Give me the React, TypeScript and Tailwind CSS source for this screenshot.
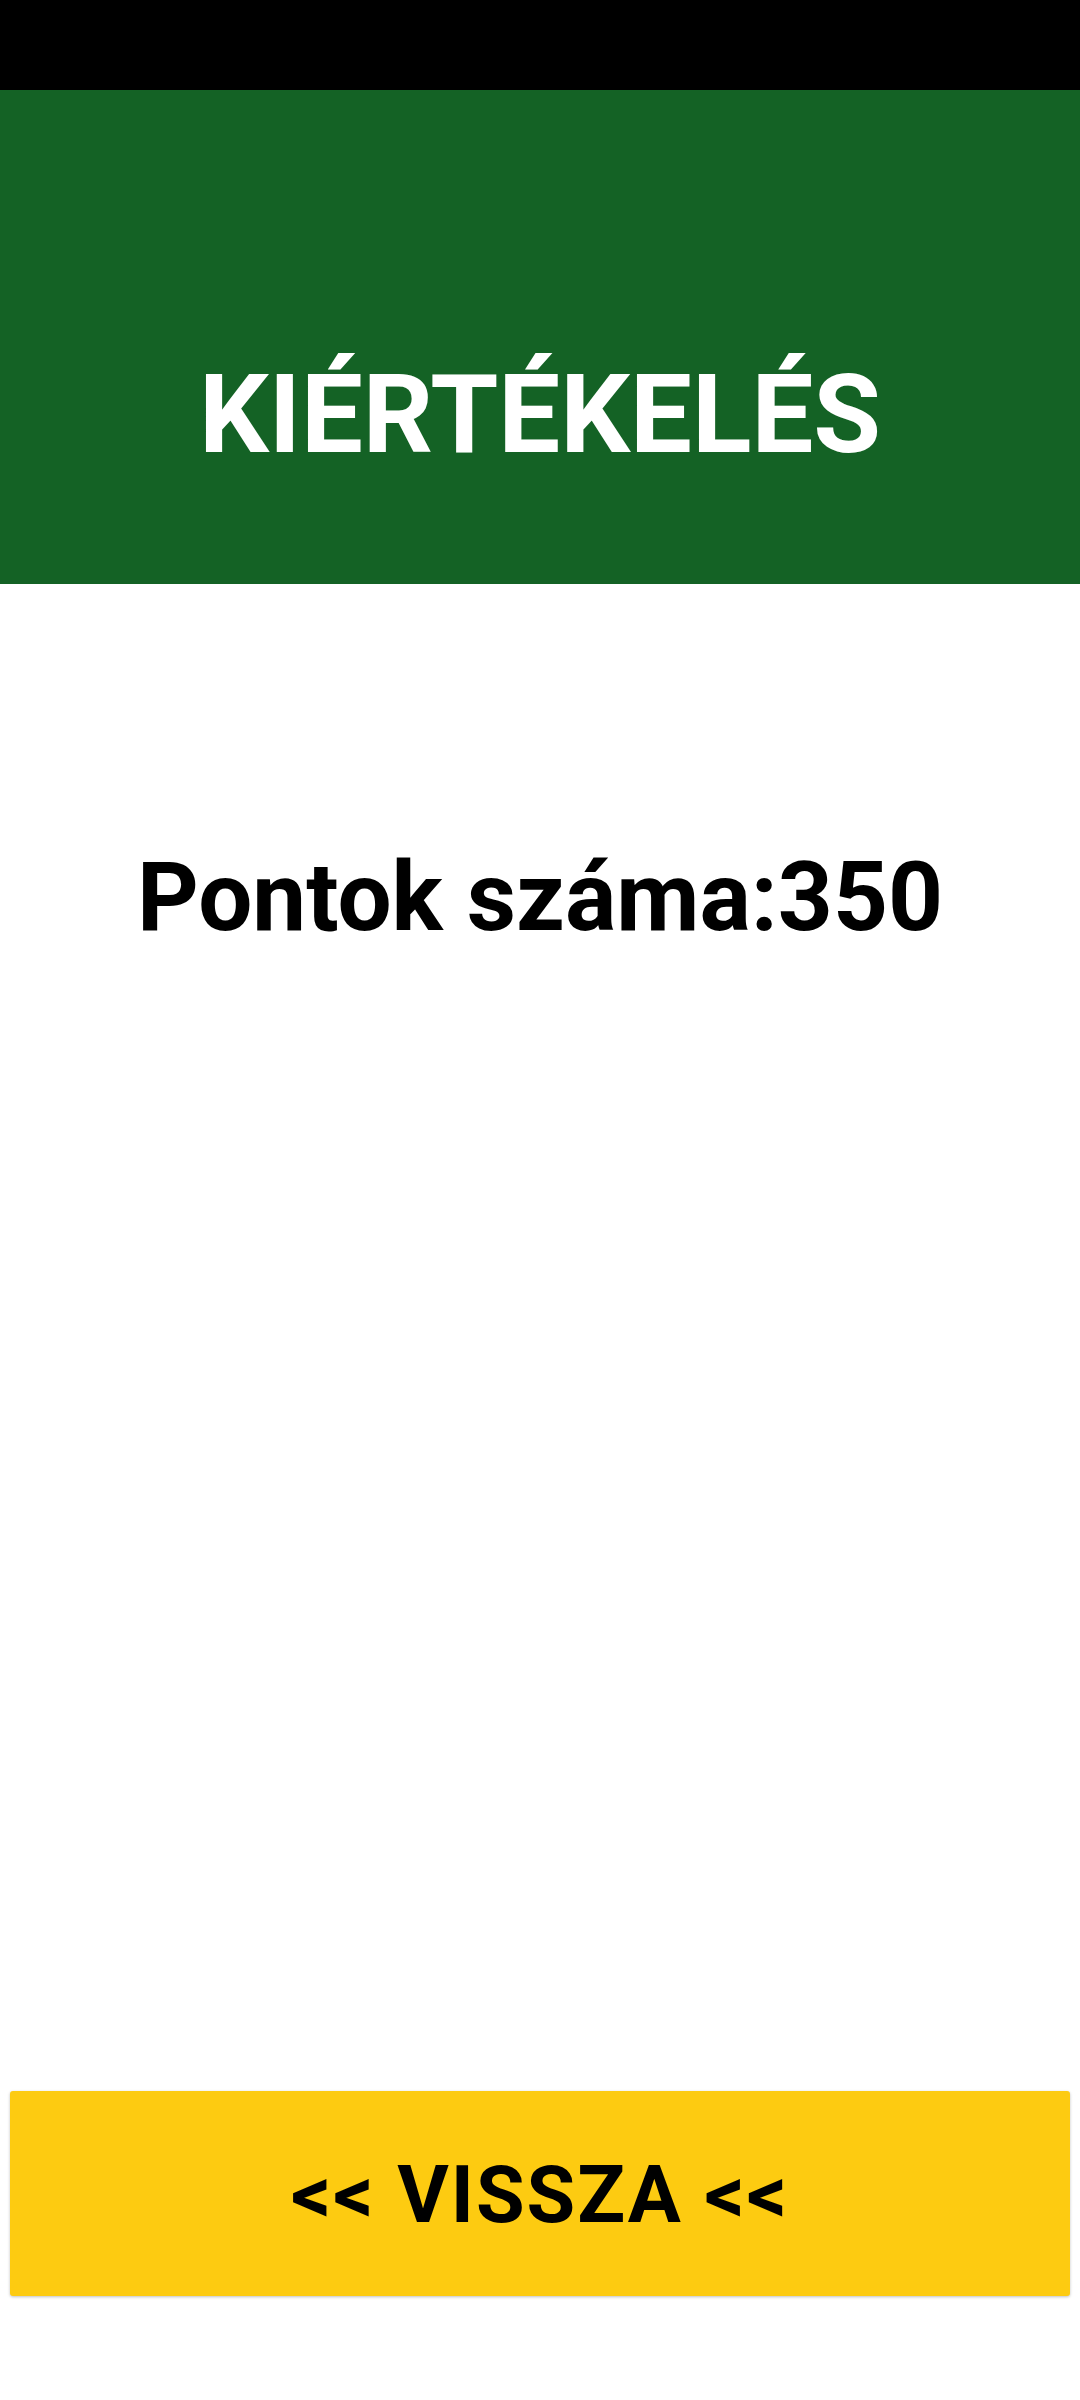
export default function App() {
  return (
    <div
      className="flex h-[2400px] w-[1080px] flex-col bg-white"
      style={{ fontFamily: "Roboto, 'Noto Sans', sans-serif" }}
    >
      {/* status bar */}
      <div className="h-[90px] bg-black" />

      <header className="h-[494px] bg-[#146225] pt-[270px]">
        <h1 className="text-center text-[110px] font-bold leading-none text-white">
          KIÉRTÉKELÉS
        </h1>
      </header>

      <p className="mt-[265px] text-center text-[96px] font-bold leading-none text-black">
        Pontok száma:350
      </p>

      <div className="flex-1" />

      <button className="mx-[10px] mb-[104px] flex h-[205px] items-center justify-center rounded-[3px] bg-[#fdcb11] pt-[3px] text-[79px] font-bold leading-none tracking-[2px] text-black shadow-[0_1px_3px_rgba(0,0,0,0.25)]">
        &lt;&lt; VISSZA &lt;&lt;
      </button>
    </div>
  );
}
